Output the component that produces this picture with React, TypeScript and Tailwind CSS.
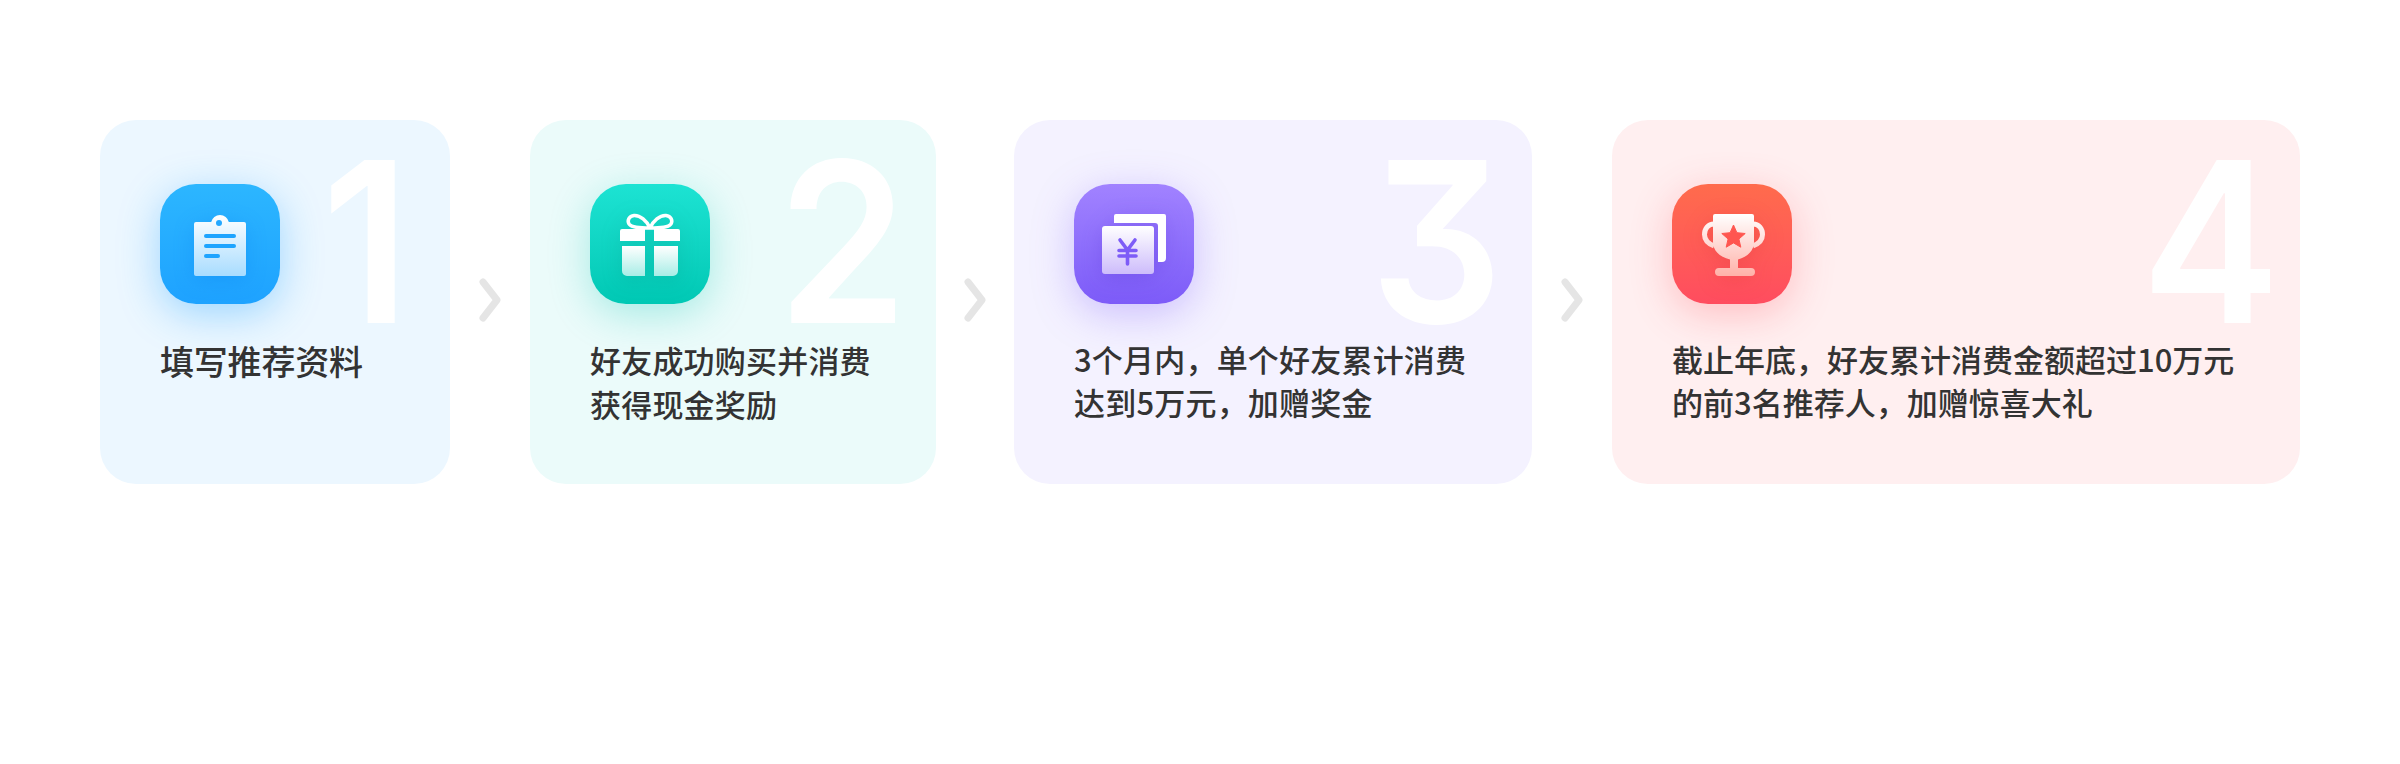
import type { ReactNode } from "react";

const ClipboardIcon = () => (
  <svg viewBox="0 0 120 120" className="w-[120px] h-[120px] drop-shadow-[0_4px_10px_rgba(0,110,230,0.22)]">
    <defs>
      <linearGradient id="clipFill" x1="0" y1="0" x2="0" y2="1">
        <stop offset="0" stopColor="#ffffff" />
        <stop offset="1" stopColor="#a8dcff" />
      </linearGradient>
    </defs>
    <path
      d="M36 38h15.200a9 9 0 0 1 17.600 0H84a2 2 0 0 1 2 2v50a2 2 0 0 1-2 2H36a2 2 0 0 1-2-2V40a2 2 0 0 1 2-2z"
      fill="url(#clipFill)"
    />
    <circle cx="59" cy="39" r="3" fill="#25a8ff" />
    <rect x="44" y="50" width="32" height="4" rx="2" fill="#1ea4ff" />
    <rect x="44" y="60" width="32" height="4" rx="2" fill="#1ea4ff" />
    <rect x="44" y="70" width="16" height="4" rx="2" fill="#1ea4ff" />
  </svg>
);

const GiftIcon = () => (
  <svg viewBox="0 0 120 120" className="w-[120px] h-[120px] drop-shadow-[0_4px_10px_rgba(0,120,110,0.18)]">
    <defs>
      <linearGradient id="giftFill" x1="0" y1="0" x2="0" y2="1">
        <stop offset="0" stopColor="#ffffff" />
        <stop offset="1" stopColor="#a8ede6" />
      </linearGradient>
    </defs>
    <path
      d="M60 44c-3-7-10-13-16-12.500-5 .5-7 5-5 8.500 3 4 12 4 21 4zM60 44c3-7 10-13 16-12.500 5 .5 7 5 5 8.500-3 4-12 4-21 4z"
      fill="none"
      stroke="#ffffff"
      strokeWidth="3.500"
    />
    <path d="M32 45h23v12H30V47a2 2 0 0 1 2-2zM64 45h24a2 2 0 0 1 2 2v10H64z" fill="#ffffff" />
    <path d="M32 62h23v30H37a5 5 0 0 1-5-5zM64 62h24v25a5 5 0 0 1-5 5H64z" fill="url(#giftFill)" />
  </svg>
);

const MoneyIcon = () => (
  <svg viewBox="0 0 120 120" className="w-[120px] h-[120px] drop-shadow-[0_4px_10px_rgba(70,30,200,0.22)]">
    <defs>
      <linearGradient id="moneyFill" x1="0" y1="0" x2="0" y2="1">
        <stop offset="0" stopColor="#ffffff" />
        <stop offset="1" stopColor="#cdbcfb" />
      </linearGradient>
    </defs>
    <path
      d="M42 30h48a2 2 0 0 1 2 2v42a4 4 0 0 1-4 4h-4V42a3 3 0 0 0-3-3H40v-7a2 2 0 0 1 2-2z"
      fill="#ffffff"
    />
    <rect x="28" y="42" width="52" height="48" rx="3" fill="url(#moneyFill)" />
    <path
      d="M46 56l7.500 10 7.500-10M45 66.500h17M45 72h17M53.500 66v14"
      fill="none"
      stroke="#7d5cf7"
      strokeWidth="3.600"
      strokeLinecap="round"
      strokeLinejoin="round"
    />
  </svg>
);

const TrophyIcon = () => (
  <svg viewBox="0 0 120 120" className="w-[120px] h-[120px] drop-shadow-[0_4px_10px_rgba(200,30,40,0.18)]">
    <defs>
      <linearGradient id="cupFill" gradientUnits="userSpaceOnUse" x1="0" y1="30" x2="0" y2="92">
        <stop offset="0" stopColor="#ffffff" />
        <stop offset="1" stopColor="#ffb1a8" />
      </linearGradient>
    </defs>
    <path
      d="M43 30h37a2 2 0 0 1 2 2v26c0 8-6 15-16 17.500V84h13a4 4 0 0 1 0 8H47a4 4 0 0 1 0-8h11v-8.500C47 73 41 66 41 58V32a2 2 0 0 1 2-2z"
      fill="url(#cupFill)"
    />
    <path
      d="M42 40c-6 0-9.500 5-9.500 10.500S37 60 42 62M81 40c6 0 9.500 5 9.500 10.500S86 60 81 62"
      fill="none"
      stroke="url(#cupFill)"
      strokeWidth="5"
    />
    <path
      d="M61.500 41l3.400 7.700 8.300.8-6.300 5.500 1.900 8.200-7.300-4.300-7.300 4.300 1.900-8.200-6.300-5.500 8.300-.8z"
      fill="#ff5650"
      stroke="#ff5650"
      strokeWidth="1"
      strokeLinejoin="round"
    />
  </svg>
);

const Chevron = ({ width }: { width: string }) => (
  <div className={`flex shrink-0 justify-center pt-[158px] ${width}`}>
    <svg viewBox="0 0 22 44" className="w-[22px] h-[44px]">
      <path
        d="M4 4l14 18L4 40"
        fill="none"
        stroke="#e5e5e5"
        strokeWidth="7"
        strokeLinecap="round"
        strokeLinejoin="round"
      />
    </svg>
  </div>
);

type Step = {
  num: string;
  width: string;
  gap: string;
  bg: string;
  tile: string;
  numPos: string;
  text: string;
  lines: string[];
  icon: ReactNode;
};

const steps: Step[] = [
  {
    num: "1",
    width: "w-[350px]",
    gap: "w-[80px]",
    bg: "bg-[#ecf7ff]",
    tile: "from-[#2cb6ff] to-[#1ea2ff] shadow-[0_10px_40px_rgba(30,160,255,0.38)]",
    numPos: "right-[40px]",
    text: "mt-[35px] leading-[44px] text-[34px] tracking-[-0.2px]",
    lines: ["填写推荐资料"],
    icon: <ClipboardIcon />,
  },
  {
    num: "2",
    width: "w-[406px]",
    gap: "w-[78px]",
    bg: "bg-[#ebfbfa]",
    tile: "from-[#1ce3d3] to-[#00c8b4] shadow-[0_10px_40px_rgba(0,200,180,0.3)]",
    numPos: "right-[28px]",
    text: "mt-[34px] leading-[44px] text-[31px] tracking-[0.2px]",
    lines: ["好友成功购买并消费", "获得现金奖励"],
    icon: <GiftIcon />,
  },
  {
    num: "3",
    width: "w-[518px]",
    gap: "w-[80px]",
    bg: "bg-[#f4f2ff]",
    tile: "from-[#a182ff] to-[#7d5bf8] shadow-[0_10px_40px_rgba(125,90,250,0.34)]",
    numPos: "right-[29px]",
    text: "mt-[33px] leading-[43px] text-[31px] tracking-[0.2px]",
    lines: ["3个月内，单个好友累计消费", "达到5万元，加赠奖金"],
    icon: <MoneyIcon />,
  },
  {
    num: "4",
    width: "w-[688px]",
    gap: "w-0",
    bg: "bg-[#ffeff0]",
    tile: "from-[#ff6b4c] to-[#ff4c5f] shadow-[0_10px_40px_rgba(255,80,90,0.3)]",
    numPos: "right-[20px]",
    text: "mt-[33px] leading-[43px] text-[31px]",
    lines: ["截止年底，好友累计消费金额超过10万元", "的前3名推荐人，加赠惊喜大礼"],
    icon: <TrophyIcon />,
  },
];

export default function App() {
  return (
    <div className="min-h-screen bg-white pl-[100px] pt-[120px] font-['Noto_Sans_CJK_SC','Noto_Sans',sans-serif]">
      <div className="flex items-start">
        {steps.map((step, index) => (
          <div key={step.num} className="flex items-start">
            <div className={`relative h-[364px] rounded-[36px] pl-[60px] pt-[64px] ${step.width} ${step.bg}`}>
              <span
                className={`absolute top-[10px] origin-right scale-x-[0.93] font-['Inter',sans-serif] text-[224px] font-semibold leading-none text-white [font-feature-settings:'cv09'] ${step.numPos}`}
              >
                {step.num}
              </span>
              <div className={`relative h-[120px] w-[120px] rounded-[36px] bg-linear-to-b ${step.tile}`}>
                {step.icon}
              </div>
              <div className={`relative font-medium text-[#333333] ${step.text}`}>
                {step.lines.map((line) => (
                  <p key={line} className="whitespace-nowrap">
                    {line}
                  </p>
                ))}
              </div>
            </div>
            {index < steps.length - 1 && <Chevron width={step.gap} />}
          </div>
        ))}
      </div>
    </div>
  );
}
